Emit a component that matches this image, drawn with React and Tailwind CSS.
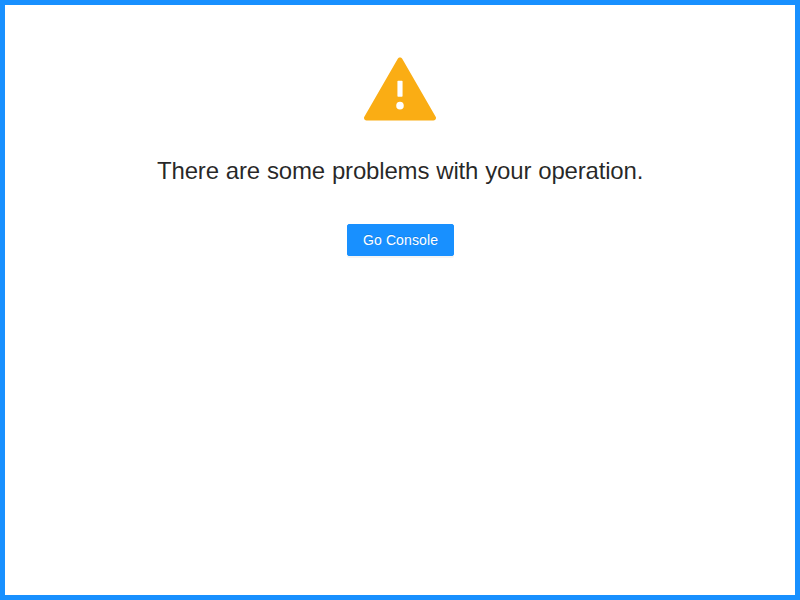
function WarningIcon() {
  return (
    <svg viewBox="64 64 896 896" className="h-[72px] w-[72px] fill-[#faad14]" aria-hidden="true">
      <path d="M955.7 856l-416-720c-6.200-10.700-16.900-16-27.700-16s-21.600 5.300-27.700 16l-416 720C56 877.400 71.400 904 96 904h832c24.600 0 40-26.600 27.700-48zM480 416c0-4.400 3.600-8 8-8h48c4.400 0 8 3.600 8 8v184c0 4.400-3.600 8-8 8h-48c-4.400 0-8-3.600-8-8V416zm32 352a48.010 48.010 0 010-96 48.010 48.010 0 010 96z" />
    </svg>
  );
}

export default function App() {
  return (
    <main className="h-screen border-[5px] border-[#1890ff] bg-white px-8 py-12 font-['Liberation_Sans',Arial,sans-serif]">
      <section className="flex flex-col items-center">
        <div className="mb-6 flex h-[72px] items-center justify-center">
          <WarningIcon />
        </div>
        <h1 className="w-[486px] whitespace-nowrap text-2xl leading-[43.2px] tracking-[-0.175px] text-black/85 [word-spacing:0.5px]">
          There are some problems with your operation.
        </h1>
        <button className="mt-8 h-8 w-[107px] whitespace-nowrap rounded-[2px] border border-[#1890ff] bg-[#1890ff] pl-[15.5px] text-left text-sm leading-[22px] tracking-[0.11px] text-white shadow-[0_2px_0_rgba(0,0,0,0.045)] [text-shadow:0_-1px_0_rgba(0,0,0,0.12)]">
          Go Console
        </button>
      </section>
    </main>
  );
}
